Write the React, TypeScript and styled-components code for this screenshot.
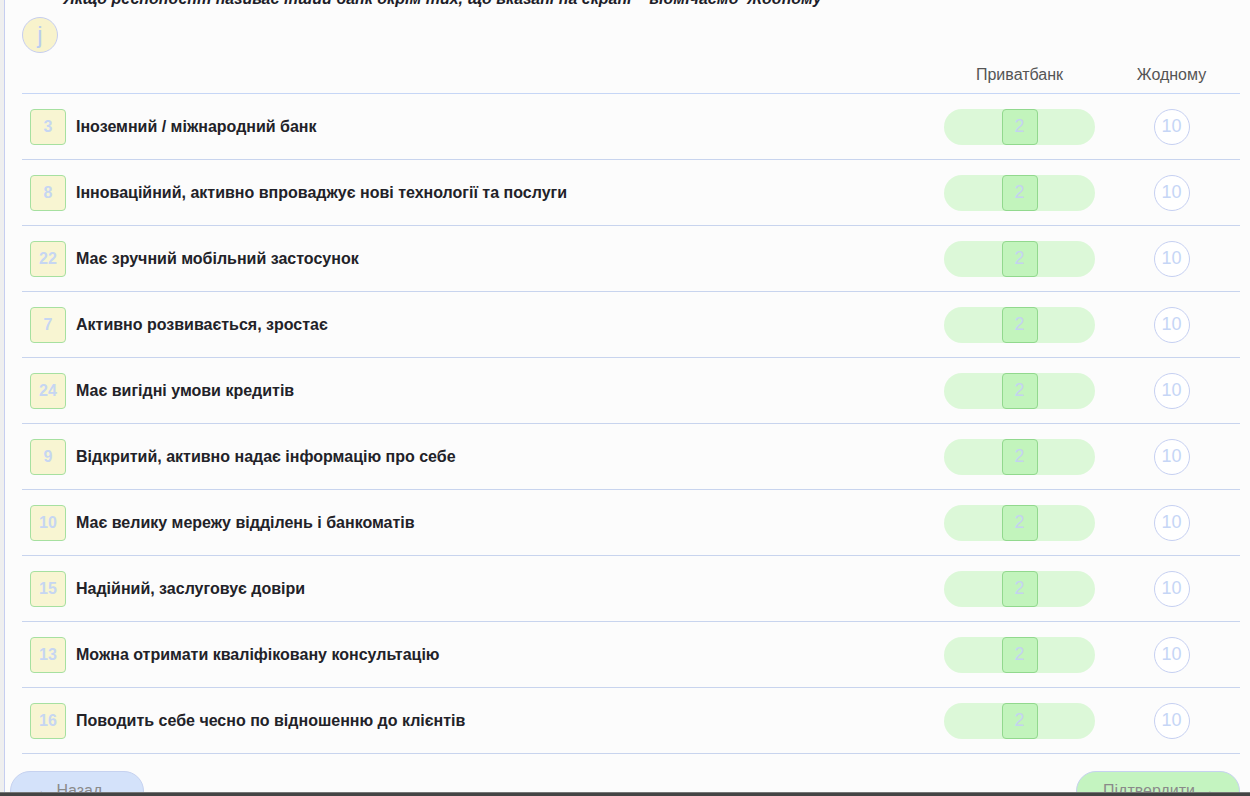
import React from "react";
import styled, { createGlobalStyle } from "styled-components";

const Global = createGlobalStyle`
  html, body { margin: 0; padding: 0; height: 796px; overflow: hidden; }
  body { background: #efefef; font-family: "Liberation Sans", Arial, sans-serif; }
  #root { height: 796px; }
`;

const Panel = styled.div`
  margin-left: 4px;
  min-height: 796px;
  box-sizing: border-box;
  border-left: 1px solid #c6cef0;
  background: #fcfcfc;
  padding: 0 10px 0 17px;
  display: flex;
  flex-direction: column;
  align-items: stretch;
  & > * { flex-shrink: 0; }
`;

const Heading = styled.div`
  margin-top: -10px;
  padding-left: 41px;
  font-size: 16px;
  line-height: 18px;
  font-weight: bold;
  font-style: italic;
  color: #1e1e2a;
  white-space: nowrap;
`;

const InfoCircle = styled.div`
  margin-top: 9px;
  align-self: flex-start;
  width: 34px;
  height: 34px;
  border-radius: 50%;
  border: 1px solid #c6cef0;
  background: #f8f3cc;
  color: #b9cdf0;
  font-size: 24px;
  display: flex;
  align-items: center;
  justify-content: center;
  line-height: 1;
`;

const Table = styled.div`
  margin-top: 5px;
  display: grid;
  grid-template-columns: 1fr 167px 137px;
`;

const HeadCell = styled.div<{ $center?: boolean }>`
  padding: 8px 0 9px;
  line-height: 18px;
  font-size: 16px;
  color: #555;
  text-align: ${(p) => (p.$center ? "center" : "left")};
  border-bottom: 1px solid #c6d6f6;
`;

const Cell = styled.div<{ $center?: boolean }>`
  height: 65px;
  border-bottom: 1px solid #c8d4ee;
  display: flex;
  align-items: center;
  justify-content: ${(p) => (p.$center ? "center" : "flex-start")};
`;

const LabelCell = styled(Cell)`
  padding-left: 8px;
  gap: 10px;
`;

const Badge = styled.div`
  width: 34px;
  height: 34px;
  flex-shrink: 0;
  border: 1px solid #a6e0a0;
  border-radius: 4px;
  background: #f8f5d2;
  color: #c6d6f2;
  font-weight: bold;
  font-size: 16px;
  display: flex;
  align-items: center;
  justify-content: center;
`;

const Label = styled.div`
  font-size: 16px;
  font-weight: bold;
  color: #222228;
`;

const Pill = styled.div`
  width: 151px;
  height: 36px;
  border-radius: 18px;
  background: #dcf8d8;
  display: flex;
  align-items: center;
  justify-content: center;
`;

const PillKey = styled.div`
  width: 34px;
  height: 34px;
  border: 1px solid #92d98e;
  border-radius: 4px;
  background: #c2f4bc;
  color: #c4d2f0;
  font-size: 18px;
  display: flex;
  align-items: center;
  justify-content: center;
`;

const RoundKey = styled.div`
  width: 34px;
  height: 34px;
  border-radius: 50%;
  border: 1px solid #c6d0f2;
  background: #fff;
  color: #c6d6f6;
  font-size: 18px;
  display: flex;
  align-items: center;
  justify-content: center;
`;

const Footer = styled.div`
  margin-top: 17px;
  margin-left: -12px;
  display: flex;
  justify-content: space-between;
`;

const Button = styled.div<{ $variant: "back" | "ok" }>`
  height: 40px;
  box-sizing: border-box;
  border-radius: 20px;
  border: 1px solid #c6d2f0;
  background: ${(p) => (p.$variant === "back" ? "#d4e2fa" : "#c4f4c0")};
  color: #8a8a8a;
  font-size: 16px;
  white-space: nowrap;
  display: flex;
  align-items: center;
  padding: 0 0 0 ${(p) => (p.$variant === "back" ? "25px" : "26px")};
  width: ${(p) => (p.$variant === "back" ? "134px" : "164px")};
`;

const BottomBar = styled.div`
  position: fixed;
  left: 0;
  right: 0;
  bottom: 0;
  height: 3px;
  background: #444;
  border-top: 1px solid #777;
`;

const rows: [number, string][] = [
  [3, "Іноземний / міжнародний банк"],
  [8, "Інноваційний, активно впроваджує нові технології та послуги"],
  [22, "Має зручний мобільний застосунок"],
  [7, "Активно розвивається, зростає"],
  [24, "Має вигідні умови кредитів"],
  [9, "Відкритий, активно надає інформацію про себе"],
  [10, "Має велику мережу відділень і банкоматів"],
  [15, "Надійний, заслуговує довіри"],
  [13, "Можна отримати кваліфіковану консультацію"],
  [16, "Поводить себе чесно по відношенню до клієнтів"],
];

export default function App() {
  return (
    <>
      <Global />
      <Panel>
        <Heading>
          Якщо респондент називає інший банк окрім тих, що вказані на екрані – відмічаємо&nbsp;&nbsp;Жодному
        </Heading>
        <InfoCircle>j</InfoCircle>
        <Table>
          <HeadCell />
          <HeadCell $center>Приватбанк</HeadCell>
          <HeadCell $center>Жодному</HeadCell>
          {rows.map(([n, text]) => (
            <React.Fragment key={n}>
              <LabelCell>
                <Badge>{n}</Badge>
                <Label>{text}</Label>
              </LabelCell>
              <Cell $center>
                <Pill>
                  <PillKey>2</PillKey>
                </Pill>
              </Cell>
              <Cell $center>
                <RoundKey>10</RoundKey>
              </Cell>
            </React.Fragment>
          ))}
        </Table>
        <Footer>
          <Button $variant="back">← Назад</Button>
          <Button $variant="ok">Підтвердити →</Button>
        </Footer>
      </Panel>
      <BottomBar />
    </>
  );
}
